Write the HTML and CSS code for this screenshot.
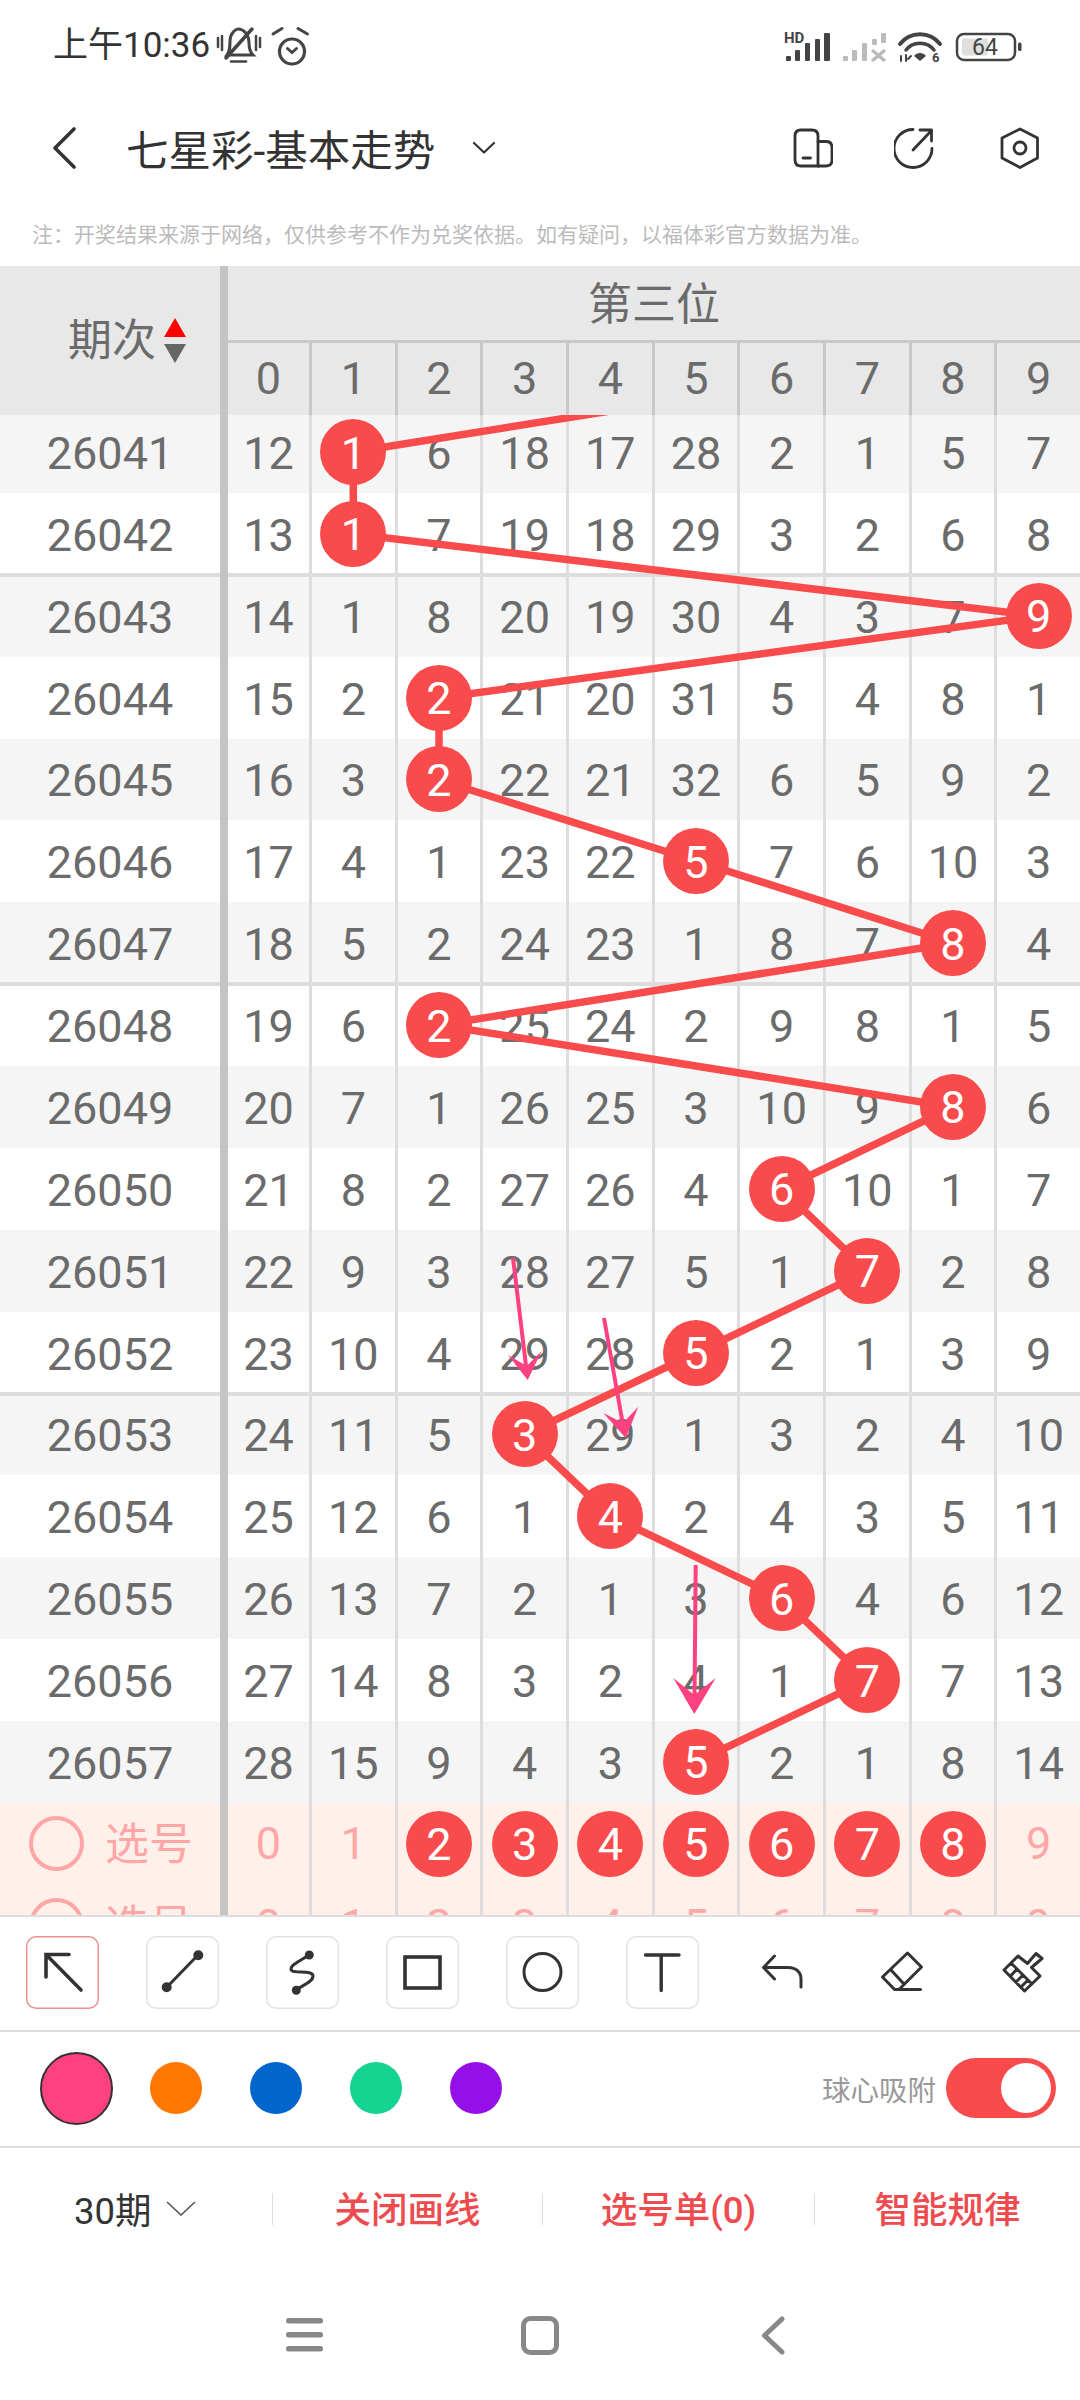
FILE: index.html
```html
<!DOCTYPE html>
<html lang="zh">
<head>
  <meta charset="UTF-8">
  <title>七星彩-基本走势</title>
  <link rel="stylesheet" href="styles.css">
</head>
<body>

  <div class="status">
    <span class="time">上午10:36</span>
    <svg class="status-left" width="120" height="55" viewBox="0 0 120 55" fill="none" stroke="#444" stroke-width="3" stroke-linecap="round">
      <path d="M21 36 C24 32 24 28 24 22 C24 14 30 10 32 10 C38 10 43 16 43 24 C43 30 44 33 47 36 Z" />
      <path d="M25 42.5 H40" stroke-width="2.5" />
      <path d="M20 39 L46 10" stroke-width="3.5" />
      <path d="M12 19 V28 M16 17 V31 M50 17 V31 M54 19 V28" stroke-width="2.5" />
      <circle cx="86" cy="32.5" r="12.5" stroke-width="3.2" />
      <path d="M81.5 29.5 L86 33.5 L90.5 29.5 M67 15 L76 9.5 M92 9.5 L101.5 15" />
    </svg>
    <svg class="status-right" width="265" height="55" viewBox="0 0 265 55">
      <text x="9" y="23" class="hd">HD</text>
      <g fill="#444">
        <rect x="11" y="36" width="5" height="5" rx="1" />
        <rect x="20" y="30" width="5" height="11" rx="1" />
        <rect x="30" y="23" width="5" height="18" rx="1" />
        <rect x="40" y="19" width="5" height="22" rx="1" />
        <rect x="49" y="13" width="6" height="28" rx="1" />
      </g>
      <g fill="#bbb">
        <rect x="68" y="36" width="5" height="5" rx="1" />
        <rect x="77" y="30" width="5" height="11" rx="1" />
        <rect x="87" y="23" width="5" height="18" rx="1" />
        <rect x="97" y="19" width="5" height="6" rx="1" />
        <rect x="106" y="13" width="5" height="10" rx="1" />
      </g>
      <path d="M97 30 L110 41 M110 30 L97 41" stroke="#bbb" stroke-width="3.5" fill="none" />
      <g fill="none" stroke="#444" stroke-linecap="round">
        <path d="M125 24 C135 11 155 11 165 24" stroke-width="4" />
        <path d="M131 30 C138 21 152 21 159 30" stroke-width="3.5" />
        <path d="M126 36 V41 M131 35 V41 M133 39 L136 36" stroke-width="2" />
      </g>
      <path d="M139 36 C142 32 148 32 151 36 L145 41 Z" fill="#444" />
      <text x="157" y="42" class="hd6">6</text>
      <rect x="182" y="14" width="58" height="26" rx="7" fill="#fff" stroke="#444" stroke-width="2.5" />
      <rect x="187" y="18.5" width="26" height="17" rx="2" fill="#dedede" />
      <text x="210" y="35" class="batt">64</text>
      <rect x="243" y="22.5" width="3.5" height="8.5" rx="1.5" fill="#444" />
    </svg>
  </div>

  <div class="nav">
    <svg width="24" height="42" viewBox="0 0 24 42" fill="none" stroke="#333" stroke-width="3.6" stroke-linecap="round" stroke-linejoin="round"><path d="M22 2 L3 21 L22 40" /></svg>
    <span class="nav-title">七星彩-基本走势</span>
    <svg class="nav-caret" width="24" height="13" viewBox="0 0 24 13" fill="none" stroke="#333" stroke-width="2.2" stroke-linecap="round" stroke-linejoin="round"><path d="M2 2 L12 11.5 L22 2" /></svg>
    <div class="nav-icons">
      <svg width="40" height="42" viewBox="0 0 40 42" fill="none" stroke="#333" stroke-width="2.8" stroke-linecap="round">
        <path d="M8 3 H19 Q25 3 25 9 V39 H8 Q2 39 2 33 V9 Q2 3 8 3 Z" />
        <path d="M25 14.5 H33 Q39 14.5 39 20.5 V33 Q39 39 33 39 H25" />
        <path d="M10 31 H17.5" />
      </svg>
      <svg width="40" height="42" viewBox="0 0 40 42" fill="none" stroke="#333" stroke-width="2.8" stroke-linecap="round" stroke-linejoin="round">
        <path d="M19 2.5 A19 19 0 1 0 38 21.5" />
        <path d="M19 23 L37 4 M26 3 H37.5 V14" />
      </svg>
      <svg width="40" height="42" viewBox="0 0 40 42" fill="none" stroke="#333" stroke-width="2.8" stroke-linejoin="round">
        <path d="M20 2 L37.5 11 V31 L20 40.5 L2 31 V11 Z" />
        <circle cx="20" cy="21" r="6" />
      </svg>
    </div>
  </div>

  <div class="note">注&#65306;开奖结果来源于网络&#65292;仅供参考不作为兑奖依据。如有疑问&#65292;以福体彩官方数据为准。</div>

  <div class="chart">
    <div class="chart-head">
      <div class="head-left">
        <span class="head-label">期次</span>
        <span class="sort"><i class="sort-up"></i><i class="sort-down"></i></span>
      </div>
      <div class="head-right">
        <div class="head-title">第三位</div>
        <div class="head-nums">
          <span>0</span><span>1</span><span>2</span><span>3</span><span>4</span><span>5</span><span>6</span><span>7</span><span>8</span><span>9</span>
        </div>
      </div>
    </div>

    <div class="rows">
      <svg class="overlay" width="1080" height="1388" viewBox="0 415 1080 1388" fill="none">
        <polyline stroke="#f94b4b" stroke-width="7.5" points="867.3,370 353.3,452 353.3,534 1038.7,616 439,698 439,780 696,861 953,943 439,1025 953,1107 781.6,1189 867.3,1271 696,1353 524.6,1434.5 610.3,1516 781.6,1598 867.3,1680 696,1762" />
        <g stroke="#ff4081" stroke-width="4">
          <path d="M513 1258 L526.5 1370" />
          <path d="M604 1318 L623 1425" />
          <path d="M695.7 1565 L694.5 1700" />
        </g>
        <g fill="#ff4081">
          <path d="M527.7 1380 L508 1355 L526.7 1366 L541.7 1351 Z" />
          <path d="M625.7 1438 L603.3 1413 L623 1423 L638.3 1406.7 Z" />
          <path d="M694.3 1714 L673.3 1678 L694.3 1695 L715.7 1678 Z" />
        </g>
      </svg>

      <div class="row first"><b>26041</b><span>12</span><span><em>1</em></span><span>6</span><span>18</span><span>17</span><span>28</span><span>2</span><span>1</span><span>5</span><span>7</span></div>
      <div class="row"><b>26042</b><span>13</span><span><em>1</em></span><span>7</span><span>19</span><span>18</span><span>29</span><span>3</span><span>2</span><span>6</span><span>8</span></div>
      <div class="row gray split"><b>26043</b><span>14</span><span>1</span><span>8</span><span>20</span><span>19</span><span>30</span><span>4</span><span>3</span><span>7</span><span><em>9</em></span></div>
      <div class="row"><b>26044</b><span>15</span><span>2</span><span><em>2</em></span><span>21</span><span>20</span><span>31</span><span>5</span><span>4</span><span>8</span><span>1</span></div>
      <div class="row gray"><b>26045</b><span>16</span><span>3</span><span><em>2</em></span><span>22</span><span>21</span><span>32</span><span>6</span><span>5</span><span>9</span><span>2</span></div>
      <div class="row"><b>26046</b><span>17</span><span>4</span><span>1</span><span>23</span><span>22</span><span><em>5</em></span><span>7</span><span>6</span><span>10</span><span>3</span></div>
      <div class="row gray"><b>26047</b><span>18</span><span>5</span><span>2</span><span>24</span><span>23</span><span>1</span><span>8</span><span>7</span><span><em>8</em></span><span>4</span></div>
      <div class="row split"><b>26048</b><span>19</span><span>6</span><span><em>2</em></span><span>25</span><span>24</span><span>2</span><span>9</span><span>8</span><span>1</span><span>5</span></div>
      <div class="row gray"><b>26049</b><span>20</span><span>7</span><span>1</span><span>26</span><span>25</span><span>3</span><span>10</span><span>9</span><span><em>8</em></span><span>6</span></div>
      <div class="row"><b>26050</b><span>21</span><span>8</span><span>2</span><span>27</span><span>26</span><span>4</span><span><em>6</em></span><span>10</span><span>1</span><span>7</span></div>
      <div class="row gray"><b>26051</b><span>22</span><span>9</span><span>3</span><span>28</span><span>27</span><span>5</span><span>1</span><span><em>7</em></span><span>2</span><span>8</span></div>
      <div class="row"><b>26052</b><span>23</span><span>10</span><span>4</span><span>29</span><span>28</span><span><em>5</em></span><span>2</span><span>1</span><span>3</span><span>9</span></div>
      <div class="row gray split"><b>26053</b><span>24</span><span>11</span><span>5</span><span><em>3</em></span><span>29</span><span>1</span><span>3</span><span>2</span><span>4</span><span>10</span></div>
      <div class="row"><b>26054</b><span>25</span><span>12</span><span>6</span><span>1</span><span><em>4</em></span><span>2</span><span>4</span><span>3</span><span>5</span><span>11</span></div>
      <div class="row gray"><b>26055</b><span>26</span><span>13</span><span>7</span><span>2</span><span>1</span><span>3</span><span><em>6</em></span><span>4</span><span>6</span><span>12</span></div>
      <div class="row"><b>26056</b><span>27</span><span>14</span><span>8</span><span>3</span><span>2</span><span>4</span><span>1</span><span><em>7</em></span><span>7</span><span>13</span></div>
      <div class="row gray"><b>26057</b><span>28</span><span>15</span><span>9</span><span>4</span><span>3</span><span><em>5</em></span><span>2</span><span>1</span><span>8</span><span>14</span></div>
    </div>

    <div class="row pick"><b><i class="pick-ring"></i>选号</b><span>0</span><span>1</span><span><em>2</em></span><span><em>3</em></span><span><em>4</em></span><span><em>5</em></span><span><em>6</em></span><span><em>7</em></span><span><em>8</em></span><span>9</span></div>
    <div class="row pick"><b><i class="pick-ring"></i>选号</b><span>0</span><span>1</span><span>2</span><span>3</span><span>4</span><span>5</span><span>6</span><span>7</span><span>8</span><span>9</span></div>
  </div>

  <div class="tools">
    <div class="tool active">
      <svg width="73" height="73" viewBox="0 0 73 73" fill="none" stroke="#333" stroke-width="3.6" stroke-linecap="round"><path d="M55 54 L20.5 19 M43 18.5 H20 V41" /></svg>
    </div>
    <div class="tool">
      <svg width="73" height="73" viewBox="0 0 73 73" fill="none" stroke="#333" stroke-width="3"><path d="M21 51 L52 19" /><circle cx="20.7" cy="51.3" r="3.5" fill="#333" /><circle cx="52.3" cy="19.3" r="3.5" fill="#333" /></svg>
    </div>
    <div class="tool">
      <svg width="73" height="73" viewBox="0 0 73 73" fill="none" stroke="#333" stroke-width="3"><path d="M43 19 C36 24 25 28 25 33 C25 39 47 33 47 40 C47 46 37 49 30 54" /><circle cx="43.3" cy="19" r="3" fill="#333" /><circle cx="30.3" cy="54.3" r="3" fill="#333" /></svg>
    </div>
    <div class="tool">
      <svg width="73" height="73" viewBox="0 0 73 73" fill="none" stroke="#333" stroke-width="3.6"><rect x="19" y="21" width="35" height="31" /></svg>
    </div>
    <div class="tool">
      <svg width="73" height="73" viewBox="0 0 73 73" fill="none" stroke="#333" stroke-width="3"><circle cx="36.5" cy="36" r="18.5" /></svg>
    </div>
    <div class="tool">
      <svg width="73" height="73" viewBox="0 0 73 73" fill="none" stroke="#333" stroke-width="3.4" stroke-linecap="round"><path d="M19.5 19 H53 M35.2 19 V54.5" /></svg>
    </div>
    <div class="tool plain">
      <svg width="73" height="73" viewBox="0 0 73 73" fill="none" stroke="#333" stroke-width="3" stroke-linecap="round" stroke-linejoin="round"><path d="M28.5 20 L17.5 31.5 L28.5 43 M17.5 31.5 H42 C50 31.5 55 36 55 43 V51" /></svg>
    </div>
    <div class="tool plain">
      <svg width="73" height="73" viewBox="0 0 73 73" fill="none" stroke="#333" stroke-width="3" stroke-linecap="round" stroke-linejoin="round"><path d="M41.5 17 L55.5 31 L33 53.5 H28.5 L16.5 41 Z M25 34 L37 47 M30 53.5 H54.5" /></svg>
    </div>
    <div class="tool plain">
      <svg width="73" height="73" viewBox="0 0 73 73" fill="none" stroke="#333" stroke-width="3" stroke-linecap="round" stroke-linejoin="round"><path d="M18 34 L32 20 L41.5 27.5 L50 17.5 L56 22.5 L45.5 31.5 L54 40 L38.5 55 Z M25 27 L46 48 M31 33 L25.5 39 M37 39 L30 46 M42 44 L36 50" /></svg>
    </div>
  </div>

  <div class="colors">
    <i class="swatch current"></i>
    <i class="swatch orange"></i>
    <i class="swatch blue"></i>
    <i class="swatch green"></i>
    <i class="swatch purple"></i>
    <span class="snap-label">球心吸附</span>
    <span class="toggle"><i></i></span>
  </div>

  <div class="tabs">
    <div class="tab-period">30期
      <svg width="30" height="15" viewBox="0 0 30 15" fill="none" stroke="#555" stroke-width="1.6"><path d="M1 1 L15 14 L29 1" /></svg>
    </div>
    <div class="tab">关闭画线</div>
    <div class="tab">选号单(0)</div>
    <div class="tab">智能规律</div>
  </div>

  <div class="sysbar">
    <svg width="37" height="36" viewBox="0 0 37 36" fill="#888"><rect y="1" width="37" height="5.5" rx="2.5" /><rect y="15" width="37" height="5.5" rx="2.5" /><rect y="29" width="37" height="5.5" rx="2.5" /></svg>
    <svg width="38" height="39" viewBox="0 0 38 39" fill="none" stroke="#888" stroke-width="5"><rect x="2.5" y="2.5" width="33" height="34" rx="7" /></svg>
    <svg width="24" height="39" viewBox="0 0 24 39" fill="none" stroke="#888" stroke-width="5" stroke-linecap="round" stroke-linejoin="round"><path d="M21 3 L3.5 19.5 L21 36" /></svg>
  </div>

</body>
</html>
```

FILE: styles.css
```css
* {
  box-sizing: border-box;
}
body {
  margin: 0;
  width: 1080px;
  height: 2400px;
  overflow: hidden;
  background-color: #fff;
  font-family: Roboto, "Noto Sans CJK SC", sans-serif;
  color: #333;
}

/* status bar */
.status {
  height: 90px;
  padding-left: 53px;
  display: flex;
  align-items: flex-start;
}
.time {
  width: 155px;
  margin-top: 24px;
  font-size: 35px;
  line-height: 44px;
  white-space: nowrap;
}
.status-left {
  margin-top: 19px;
  margin-left: -2px;
}
.status-right {
  margin-top: 20px;
  margin-left: 449px;
}
.hd {
  font: bold 15px Roboto, sans-serif;
  fill: #444;
}
.hd6 {
  font: bold 13px Roboto, sans-serif;
  fill: #444;
}
.batt {
  font: 23px Roboto, sans-serif;
  fill: #444;
  text-anchor: middle;
}

/* title bar */
.nav {
  height: 115px;
  padding: 0 40px 0 52px;
  display: flex;
  align-items: center;
}
.nav-title {
  margin-left: 50px;
  font-size: 42.5px;
  font-weight: 400;
  white-space: nowrap;
}
.nav-caret {
  margin-left: 37px;
}
.nav-icons {
  margin-left: auto;
  display: flex;
  gap: 61px;
}
.nav-icons svg:last-child {
  margin-left: 5px;
}

.note {
  height: 61px;
  padding: 15px 0 0 32px;
  font-size: 21px;
  line-height: 30px;
  color: #bbb;
  white-space: nowrap;
}

/* chart */
.chart {
  height: 1649px;
  overflow: hidden;
  font-size: 45px;
  color: #6b6b6b;
}
.chart-head {
  height: 149px;
  display: grid;
  grid-template-columns: 228px 1fr;
  background-color: #e8e8e8;
}
.head-left {
  padding-left: 68px;
  border-right: 8px solid #c4c4c4;
  display: flex;
  align-items: center;
  gap: 8px;
  font-size: 44px;
}
.head-label {
  padding-bottom: 8px;
}
.sort {
  display: flex;
  flex-direction: column;
  gap: 7px;
}
.sort i {
  display: block;
  width: 0;
  border-left: 11px solid transparent;
  border-right: 11px solid transparent;
}
.sort-up {
  border-bottom: 19px solid #f00;
}
.sort-down {
  border-top: 19px solid #666;
}
.head-title {
  height: 77px;
  padding-bottom: 5px;
  border-bottom: 3px solid #c8c8c8;
  display: flex;
  align-items: center;
  justify-content: center;
  font-size: 44px;
}
.head-nums {
  height: 72px;
  display: grid;
  grid-template-columns: 81px repeat(9, 1fr);
}
.head-nums span {
  padding-bottom: 2px;
  display: flex;
  align-items: center;
  justify-content: center;
}
.head-nums span + span {
  border-left: 3px solid #c8c8c8;
}

.rows {
  position: relative;
}
.overlay {
  position: absolute;
  left: 0;
  top: 0;
  z-index: 1;
  pointer-events: none;
}
.row {
  height: 81.875px;
  display: grid;
  grid-template-columns: 228px 81px repeat(9, 1fr);
  align-items: stretch;
}
.row.first {
  height: 77.9px;
  padding-bottom: 3.5px;
  background-color: #f5f5f5;
}
.row.gray {
  background-color: #f5f5f5;
}
.row.split {
  box-shadow: 0 -2px 0 #ddd, inset 0 2px 0 #ddd;
}
.row b {
  padding-top: 3px;
  font-weight: 400;
  border-right: 8px solid #c4c4c4;
  display: flex;
  align-items: center;
  justify-content: center;
}
.row span {
  padding-top: 3px;
  display: flex;
  align-items: center;
  justify-content: center;
}
.row span + span {
  border-left: 3px solid #ddd;
}
.row.first b,
.row.first span {
  margin-bottom: -3.5px;
  padding-bottom: 3.5px;
}
.row em {
  position: relative;
  z-index: 2;
  flex: none;
  width: 66px;
  height: 66px;
  margin-top: -3px;
  padding-top: 2px;
  border-radius: 50%;
  background-color: #f94b4b;
  color: #fff;
  font-style: normal;
  display: flex;
  align-items: center;
  justify-content: center;
}

/* pick rows under the chart */
.row.pick {
  background-color: #fff0ea;
  color: #ffa6a6;
}
.row.pick b {
  justify-content: flex-start;
  padding: 3px 0 0 29px;
  gap: 21px;
  font-size: 44px;
  line-height: 1;
}
.pick-ring {
  width: 55px;
  height: 55px;
  margin-top: -3px;
  border: 4px solid #ffa6a6;
  border-radius: 50%;
}
.row.pick span {
  padding-top: 0;
}
.row.pick em {
  margin-top: 0;
}

/* drawing tools */
.tools {
  height: 115px;
  border-top: 2px solid #ddd;
  padding: 19px 0 0 25.5px;
  display: flex;
  gap: 47px;
}
.tool {
  width: 73px;
  height: 73px;
  flex: none;
  border-radius: 10px;
  box-shadow: inset 0 0 0 1.5px #e2e2e2;
}
.tool.active {
  box-shadow: inset 0 0 0 1.5px #ec8f8f;
}
.tool.plain {
  box-shadow: none;
}
.tool svg {
  display: block;
}

.colors {
  height: 116px;
  border-top: 2px solid #ddd;
  padding: 0 24px 2px 40px;
  display: flex;
  align-items: center;
  gap: 48px;
}
.swatch {
  width: 52px;
  height: 52px;
  flex: none;
  border-radius: 50%;
}
.swatch.current {
  width: 73px;
  height: 73px;
  margin-right: -11.5px;
  background-color: #ff4081;
  border: 2px solid #333;
}
.orange {
  background-color: #ff7800;
}
.blue {
  background-color: #0066cc;
}
.green {
  background-color: #15d492;
}
.purple {
  background-color: #9510e8;
}
.snap-label {
  margin-left: auto;
  margin-right: -38px;
  font-size: 28.5px;
  color: #999;
}
.toggle {
  width: 110px;
  height: 60px;
  padding: 5px;
  border-radius: 30px;
  background-color: #f94b4b;
  display: flex;
  justify-content: flex-end;
}
.toggle i {
  width: 50px;
  height: 50px;
  border-radius: 50%;
  background-color: #fff;
}

/* bottom actions */
.tabs {
  height: 124px;
  border-top: 2px solid #ddd;
  display: grid;
  grid-template-columns: 272px 270px 272px 1fr;
  align-items: center;
  font-size: 36.5px;
}
.tab-period {
  padding-left: 74px;
  padding-bottom: 2px;
  display: flex;
  align-items: center;
  gap: 14px;
  white-space: nowrap;
}
.tab {
  height: 32px;
  border-left: 1px solid #ddd;
  color: #ee4b4f;
  font-weight: 500;
  line-height: 36px;
  text-align: center;
  white-space: nowrap;
}

.sysbar {
  height: 130px;
  padding-left: 286px;
  display: flex;
  align-items: center;
}
.sysbar svg:nth-child(2) {
  margin-left: 198px;
}
.sysbar svg:nth-child(3) {
  margin-left: 202px;
}
```
